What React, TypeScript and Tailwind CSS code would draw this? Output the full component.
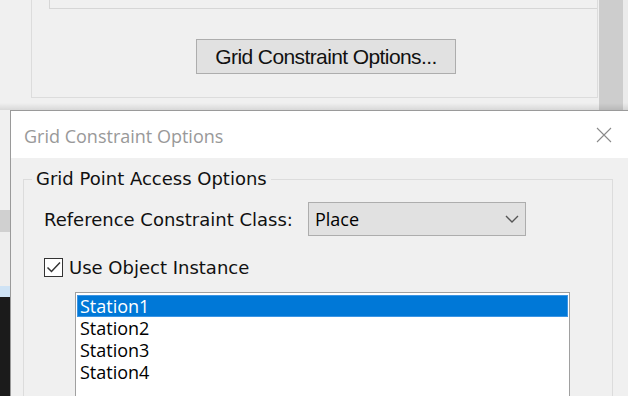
import React from "react";

const dv = { fontFamily: '"DejaVu Sans", sans-serif' };
const os = { fontFamily: '"Open Sans", sans-serif' };

export default function App() {
  const items = ["Station1", "Station2", "Station3", "Station4"];
  return (
    <div className="w-[628px] h-[396px] overflow-hidden bg-[#f0f0f0] flex flex-col">
      {/* background window */}
      <div className="relative h-[110px] shrink-0 flex">
        <div className="w-[599px] h-full">
          <div className="ml-[31px] w-[567px] h-[98px] border-x border-b border-[#dcdcdc] flex flex-col">
            <div className="ml-[17px] h-[9px] shrink-0 border-l border-b border-[#d6d6d6]" />
            <button
              className="mt-[30px] ml-[164px] w-[260px] h-[35px] shrink-0 bg-[#e1e1e1] border border-[#adadad] flex items-center justify-center text-[21px] tracking-[-0.6px] text-[#111]"
              style={{ fontFamily: '"Liberation Sans", Arial, sans-serif' }}
            >
              Grid Constraint Options...
            </button>
          </div>
        </div>
        <div className="w-[24px] h-full bg-[#cdcdcd]" />
        <div className="flex-1 h-full bg-[#ebebeb]" />
        <div className="absolute inset-x-0 bottom-0 h-[7px] bg-gradient-to-b from-transparent to-black/10" />
      </div>

      {/* lower area */}
      <div className="flex flex-1 min-h-0">
        <div className="w-[10px] shrink-0 flex flex-col">
          <div className="h-[100px] shrink-0 bg-[#f0f0f0]" />
          <div className="h-[22px] shrink-0 bg-[#d0d0d0]" />
          <div className="h-[54px] shrink-0 bg-[#eeeeee]" />
          <div className="h-[11px] shrink-0 bg-[#cfe3f5]" />
          <div className="flex-1 bg-[#1b1b1b]" />
        </div>

        {/* dialog */}
        <div className="flex-1 min-h-0 overflow-hidden flex flex-col border-l border-t border-[#9a9a9a] bg-[#f0f0f0]">
          <div className="h-[47px] shrink-0 bg-white flex items-center justify-between pl-[13px] pr-[16px]">
            <span className="mt-[3px] text-[18px] text-[#999999]" style={os}>
              Grid Constraint Options
            </span>
            <svg width="16" height="16" viewBox="0 0 16 16">
              <path d="M1 1 L15 15 M15 1 L1 15" stroke="#8a8a8a" strokeWidth="1.1" fill="none" />
            </svg>
          </div>

          <fieldset className="shrink-0 mt-[10px] ml-[12px] mr-[15px] border border-[#dcdcdc] pb-[20px]">
            <legend className="ml-[8px] px-[4px] text-[18px] leading-[22px] text-[#111]" style={dv}>
              Grid Point Access Options
            </legend>

            <div className="pl-[20px]">
              <div className="mt-[12px] flex items-center h-[34px]">
                <span className="w-[264px] text-[18px] text-[#111]" style={dv}>
                  Reference Constraint Class:
                </span>
                <div className="w-[218px] h-[34px] bg-[#e1e1e1] border border-[#adadad] flex items-center justify-between pl-[6px] pr-[6px]">
                  <span className="text-[18px] text-black" style={os}>
                    Place
                  </span>
                  <svg width="14" height="8" viewBox="0 0 14 8">
                    <path d="M1 1 L7 7 L13 1" stroke="#555" strokeWidth="1.4" fill="none" />
                  </svg>
                </div>
              </div>

              <div className="mt-[21px] flex items-center h-[20px] gap-[6px]">
                <div className="w-[19px] h-[19px] border border-[#333] bg-white flex items-center justify-center">
                  <svg width="17" height="15" viewBox="0 0 17 15">
                    <path d="M2.5 7.5 L6.5 11.5 L15 2.5" stroke="#333" strokeWidth="1.5" fill="none" />
                  </svg>
                </div>
                <span className="text-[18px] text-[#111]" style={dv}>
                  Use Object Instance
                </span>
              </div>

              <div className="mt-[15px] ml-[31px] w-[495px] h-[130px] border border-[#a0a0a0] bg-white pt-[2px] px-px">
                {items.map((s, i) => (
                  <div
                    key={s}
                    className={
                      i === 0
                        ? "h-[22px] leading-[20px] pl-[2px] bg-[#0078d7] border border-[#3c95e4] text-white text-[18px]"
                        : "h-[22px] leading-[22px] pl-[3px] text-black text-[18px]"
                    }
                    style={os}
                  >
                    {s}
                  </div>
                ))}
              </div>
            </div>
          </fieldset>
        </div>
      </div>
    </div>
  );
}
